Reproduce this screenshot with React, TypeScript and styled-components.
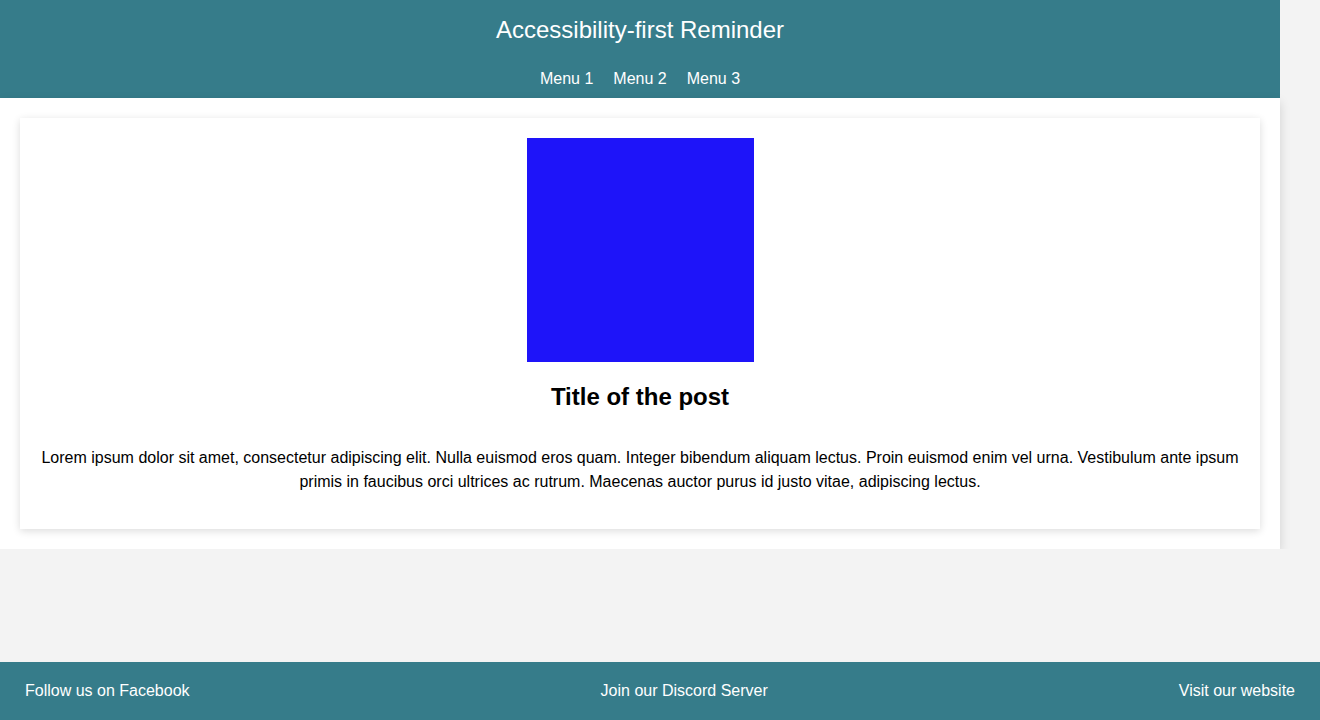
import React, { ReactElement } from 'react';
import styled, { createGlobalStyle } from 'styled-components';

const GlobalStyle = createGlobalStyle`
  html, body {
    margin: 0;
    padding: 0;
    background: #f3f3f3;
    font-family: "Liberation Sans", Arial, sans-serif;
  }
`;

const TEAL = '#367c8a';

const Page = styled.div`
  width: 1280px;
`;

const Header = styled.header`
  background: ${TEAL};
  color: #fff;
  display: flex;
  flex-direction: column;
  align-items: center;
  padding: 16px 0 10px;
`;

const SiteTitle = styled.h1`
  margin: 0 0 26px;
  font-size: 24px;
  line-height: 28px;
  font-weight: normal;
`;

const Nav = styled.nav`
  display: flex;
  gap: 20px;
  font-size: 16px;
  line-height: 18px;
`;

const NavLink = styled.a`
  color: #fff;
  text-decoration: none;
`;

const Main = styled.main`
  background: #fff;
  padding: 20px;
  box-shadow: 0 4px 10px rgba(0, 0, 0, 0.14);
`;

const Card = styled.article`
  background: #fff;
  padding: 20px;
  display: flex;
  flex-direction: column;
  align-items: center;
  text-align: center;
  box-shadow: 0 2px 8px rgba(0, 0, 0, 0.14);
`;

const Thumb = styled.div`
  width: 227px;
  height: 224px;
  background: #1e14f9;
`;

const PostTitle = styled.h2`
  margin: 21px 0 35px;
  font-size: 24px;
  line-height: 28px;
  font-weight: bold;
  color: #000;
`;

const Body = styled.p`
  margin: 0 0 15px;
  font-size: 16px;
  line-height: 24px;
  color: #000;
`;

const Footer = styled.footer`
  position: fixed;
  left: 0;
  right: 0;
  bottom: 0;
  height: 58px;
  padding: 0 25px;
  background: ${TEAL};
  display: flex;
  align-items: center;
  justify-content: space-between;
  font-size: 16px;
`;

const FooterLink = styled.a`
  color: #fff;
  text-decoration: none;
`;

const menus = ['Menu 1', 'Menu 2', 'Menu 3'];
const footerLinks = ['Follow us on Facebook', 'Join our Discord Server', 'Visit our website'];

const App = (): ReactElement => (
  <>
    <GlobalStyle />
    <Page>
      <Header>
        <SiteTitle>Accessibility-first Reminder</SiteTitle>
        <Nav>
          {menus.map((item) => (
            <NavLink key={item} href="#">{item}</NavLink>
          ))}
        </Nav>
      </Header>
      <Main>
        <Card>
          <Thumb role="img" aria-label="Post image" />
          <PostTitle>Title of the post</PostTitle>
          <Body>
            Lorem ipsum dolor sit amet, consectetur adipiscing elit. Nulla euismod eros quam. Integer bibendum
            aliquam lectus. Proin euismod enim vel urna. Vestibulum ante ipsum primis in faucibus orci ultrices ac
            rutrum. Maecenas auctor purus id justo vitae, adipiscing lectus.
          </Body>
        </Card>
      </Main>
    </Page>
    <Footer>
      {footerLinks.map((item) => (
        <FooterLink key={item} href="#">{item}</FooterLink>
      ))}
    </Footer>
  </>
);

export default App;
